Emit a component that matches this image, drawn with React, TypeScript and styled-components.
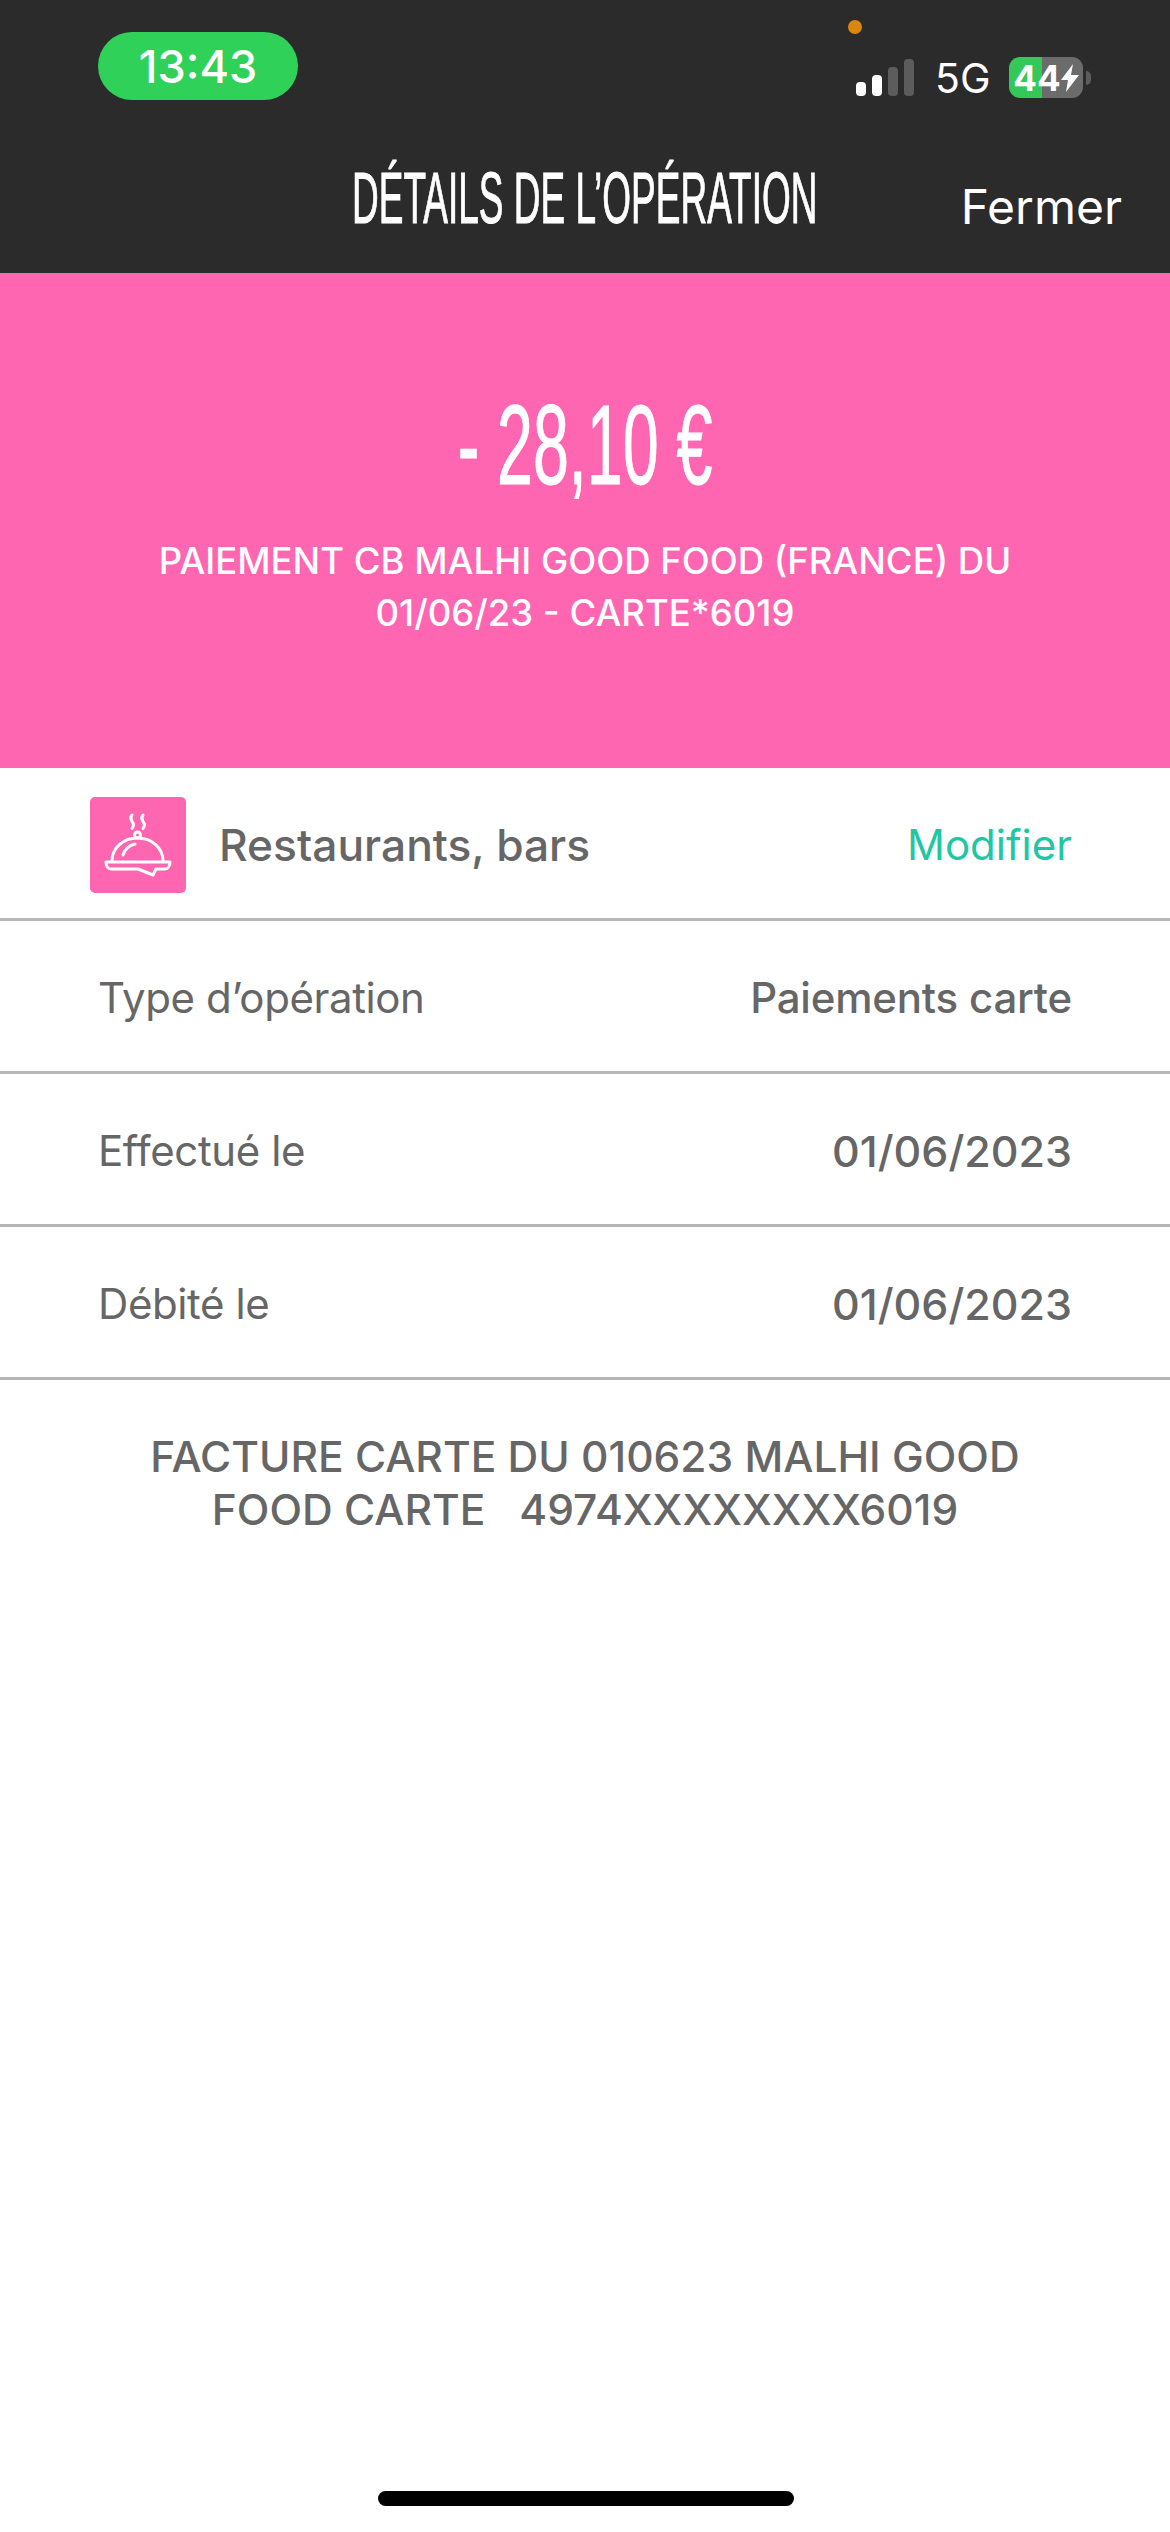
import React from 'react';
import styled, { createGlobalStyle } from 'styled-components';

const GlobalStyle = createGlobalStyle`
    html, body {
        margin: 0;
        padding: 0;
        background: #ffffff;
        font-family: Inter, 'Liberation Sans', sans-serif;
    }
`;

const Page = styled.div`
    position: relative;
    width: 1170px;
    height: 2532px;
    display: flex;
    flex-direction: column;
    overflow: hidden;
`;

const Header = styled.header`
    height: 273px;
    background: #2b2b2b;
    display: flex;
    flex-direction: column;
    flex-shrink: 0;
`;

const StatusBar = styled.div`
    display: flex;
    align-items: flex-start;
    justify-content: space-between;
    padding: 32px 79px 0 98px;
    height: 128px;
    box-sizing: border-box;
`;

const TimePill = styled.div`
    width: 200px;
    height: 68px;
    border-radius: 34px;
    background: #30d158;
    color: #fff;
    font-size: 45px;
    font-weight: 500;
    display: flex;
    align-items: center;
    justify-content: center;
`;

const StatusRight = styled.div`
    display: flex;
    align-items: center;
    margin-top: 25px;
    height: 41px;
`;

const PrivacyDot = styled.span`
    position: absolute;
    left: 848px;
    top: 20px;
    width: 14px;
    height: 14px;
    border-radius: 50%;
    background: #d9870f;
`;

const SignalBars = styled.div`
    display: flex;
    align-items: flex-end;
    gap: 6px;
    height: 37px;
    margin-right: 21px;
`;

const SignalBar = styled.span<{ $h: number; $on?: boolean }>`
    width: 10px;
    height: ${({ $h }) => $h}px;
    border-radius: 4px;
    background: ${({ $on }) => ($on ? '#ffffff' : '#5c5c5c')};
`;

const NetworkLabel = styled.span`
    color: #fff;
    font-size: 41px;
    width: 74px;
    font-weight: 400;
`;

const Battery = styled.div`
    width: 74px;
    height: 41px;
    border-radius: 11px;
    overflow: hidden;
    background: linear-gradient(to right, #34c759 0 33px, #6b6b6b 33px);
    color: #fff;
    font-size: 35px;
    font-weight: 700;
    display: flex;
    align-items: center;
    justify-content: center;
`;

const BatteryNub = styled.span`
    width: 5px;
    height: 14px;
    margin-left: 3px;
    border-radius: 0 5px 5px 0;
    background: #5c5c5c;
`;

const NavRow = styled.div`
    position: relative;
    flex: 1;
    display: flex;
    align-items: flex-start;
    justify-content: center;
`;

const Condensed = styled.span<{ $sx: number }>`
    display: inline-block;
    white-space: nowrap;
    transform: scaleX(${({ $sx }) => $sx});
    font-family: 'Liberation Sans', sans-serif;
    font-weight: 400;
    -webkit-text-stroke: 1px #fff;
`;

const Title = styled(Condensed)`
    color: #fff;
    font-size: 72px;
    line-height: 72px;
    margin-top: 34px;
`;

const CloseButton = styled.span`
    position: absolute;
    right: 48px;
    top: 50px;
    color: #fff;
    font-size: 48px;
    line-height: 58px;
`;

const Hero = styled.section`
    height: 495px;
    background: #ff66b2;
    color: #fff;
    display: flex;
    flex-direction: column;
    align-items: center;
    flex-shrink: 0;
`;

const Amount = styled(Condensed)`
    font-size: 114px;
    line-height: 120px;
    margin-top: 112px;
`;

const Label = styled.div`
    width: 880px;
    margin-top: 30px;
    text-align: center;
    font-size: 36.5px;
    font-weight: 500;
    line-height: 52px;
`;

const Row = styled.div`
    height: 153px;
    box-sizing: border-box;
    border-bottom: 3px solid #b5b5b5;
    padding: 3px 98px 0;
    display: flex;
    align-items: center;
    justify-content: space-between;
    color: #666666;
    flex-shrink: 0;
`;

const CategoryRow = styled(Row)`
    padding-left: 90px;
`;

const Category = styled.div`
    display: flex;
    align-items: center;
    gap: 33px;
    font-size: 44.300px;
    font-weight: 500;
`;

const IconTile = styled.div`
    width: 96px;
    height: 96px;
    border-radius: 5px;
    background: #ff66b2;
    display: flex;
`;

const ModifyLink = styled.span`
    color: #1fc7a4;
    font-size: 42px;
`;

const RowLabel = styled.span`
    font-size: 42px;
    letter-spacing: -0.4px;
`;

const RowValue = styled.span`
    font-size: 42px;
    font-weight: 500;
    letter-spacing: -0.2px;
`;

const DateValue = styled(RowValue)`
    font-size: 43px;
    letter-spacing: 0;
`;

const Note = styled.p`
    margin: 50px auto 0;
    width: 960px;
    text-align: center;
    font-size: 42.500px;
    line-height: 53px;
    font-weight: 500;
    color: #666666;
    white-space: pre-wrap;
`;

const HomeIndicator = styled.div`
    position: absolute;
    left: 378px;
    top: 2491px;
    width: 416px;
    height: 15px;
    border-radius: 8px;
    background: #000;
`;

const ClocheIcon = () => (
    <svg width="96" height="96" viewBox="0 0 96 96" fill="none" stroke="#fff" strokeWidth="3" strokeLinecap="round" strokeLinejoin="round">
        <path d="M42 18c-2 2.500-2 4 0 6.500s2 4.500 0 7" />
        <path d="M53 18c-2 2.500-2 4 0 6.500s2 4.500 0 7" />
        <circle cx="47.500" cy="38" r="3" />
        <path d="M22 64c0-13 11-23 25.500-23S73 51 73 64" />
        <path d="M33 58c1.500-5 6-10 12-11" />
        <path d="M16 65h64c0 4-2 7-5 7H66l-3 6-15-6H21c-3 0-5-3-5-7z" />
    </svg>
);

const BoltIcon = () => (
    <svg width="18" height="28" viewBox="0 0 18 28" fill="#fff">
        <path d="M12 0 0 16h7l-2 12L18 11h-8z" />
    </svg>
);

export default function App() {
    return (
        <Page>
            <GlobalStyle />
            <Header>
                <StatusBar>
                    <TimePill>13:43</TimePill>
                    <PrivacyDot />
                    <StatusRight>
                        <SignalBars>
                            <SignalBar $h={14} $on />
                            <SignalBar $h={21} $on />
                            <SignalBar $h={29} />
                            <SignalBar $h={37} />
                        </SignalBars>
                        <NetworkLabel>5G</NetworkLabel>
                        <Battery>
                            44
                            <BoltIcon />
                        </Battery>
                        <BatteryNub />
                    </StatusRight>
                </StatusBar>
                <NavRow>
                    <Title $sx={0.514}>DÉTAILS DE L’OPÉRATION</Title>
                    <CloseButton>Fermer</CloseButton>
                </NavRow>
            </Header>
            <Hero>
                <Amount $sx={0.566}>- 28,10 €</Amount>
                <Label>PAIEMENT CB MALHI GOOD FOOD (FRANCE) DU 01/06/23 - CARTE*6019</Label>
            </Hero>
            <CategoryRow>
                <Category>
                    <IconTile>
                        <ClocheIcon />
                    </IconTile>
                    <span>Restaurants, bars</span>
                </Category>
                <ModifyLink>Modifier</ModifyLink>
            </CategoryRow>
            <Row>
                <RowLabel>Type d’opération</RowLabel>
                <RowValue>Paiements carte</RowValue>
            </Row>
            <Row>
                <RowLabel>Effectué le</RowLabel>
                <DateValue>01/06/2023</DateValue>
            </Row>
            <Row>
                <RowLabel>Débité le</RowLabel>
                <DateValue>01/06/2023</DateValue>
            </Row>
            <Note>{'FACTURE CARTE DU 010623 MALHI GOOD FOOD CARTE   4974XXXXXXXX6019'}</Note>
            <HomeIndicator />
        </Page>
    );
}
